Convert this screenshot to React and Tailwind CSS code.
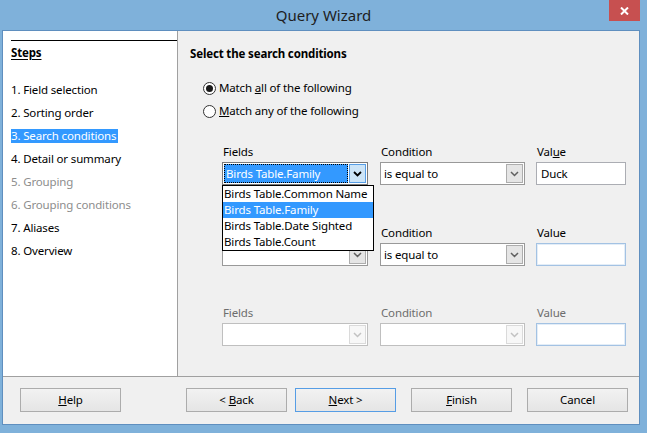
import React from "react";

const Chevron = ({ color = "#000", w = 1.6 }) => (
  <svg width="9" height="6" viewBox="0 0 9 6">
    <polyline points="1,1 4.5,4.5 8,1" fill="none" stroke={color} strokeWidth={w} />
  </svg>
);

function Combo({ className = "", text = "", focused, disabled }) {
  return (
    <div
      className={`flex h-[23px] p-[1px] bg-white border ${
        disabled ? "border-[#bfbfbf]" : focused ? "border-[#7a7a7a]" : "border-[#999999]"
      } ${className}`}
    >
      <div
        className={`flex-1 flex items-center pl-[2px] ${
          focused ? "bg-[#3399ff] text-white outline-1 outline-dotted outline-black -outline-offset-1" : ""
        }`}
      >
        {text}
      </div>
      <div
        className={`w-[17px] ml-[1px] flex items-center justify-center border ${
          focused
            ? "bg-[#cce4f7] border-[#569de5]"
            : disabled
            ? "bg-[#f7f7f7] border-[#dadada]"
            : "bg-[#e5e5e5] border-[#adadad]"
        }`}
      >
        <Chevron color={focused ? "#000" : disabled ? "#c2c2c2" : "#606060"} w={focused ? 1.8 : 1.5} />
      </div>
    </div>
  );
}

function Value({ text = "", blue }) {
  return (
    <div
      className={`w-[90px] h-[23px] bg-white border flex items-center pl-[4px] ${
        blue ? "border-[#a3c2e3] shadow-[inset_0_0_0_1px_#e3edf7]" : "border-[#abadb3]"
      }`}
    >
      {text}
    </div>
  );
}

function Row({ children, disabled, valueLabel, blue, value, conditionText, fieldsText, focused, hideFieldsLabel }) {
  const lbl = disabled ? "text-[#6d6d6d]" : "text-black";
  return (
    <div className="flex">
      <div className="w-[146px] mr-[12px] relative">
        <div className={`h-[16px] leading-[16px] pl-[1px] ${lbl} ${hideFieldsLabel ? "invisible" : ""}`}>Fields</div>
        <Combo className="mt-[2px]" text={fieldsText} focused={focused} disabled={disabled} />
        {children}
      </div>
      <div className="w-[145px] mr-[11px]">
        <div className={`h-[16px] leading-[16px] pl-[1px] ${lbl}`}>Condition</div>
        <Combo className="mt-[2px]" text={conditionText} disabled={disabled} />
      </div>
      <div className="w-[90px]">
        <div className={`h-[16px] leading-[16px] pl-[1px] ${lbl}`}>{valueLabel}</div>
        <div className="mt-[2px]">
          <Value text={value} blue={blue} />
        </div>
      </div>
    </div>
  );
}

const steps = [
  { t: "1. Field selection" },
  { t: "2. Sorting order" },
  { t: "3. Search conditions", active: true },
  { t: "4. Detail or summary" },
  { t: "5. Grouping", dis: true },
  { t: "6. Grouping conditions", dis: true },
  { t: "7. Aliases" },
  { t: "8. Overview" },
];

function Btn({ children, primary, className = "" }) {
  return (
    <button
      className={`w-[101px] h-[24px] border bg-linear-to-b from-[#f2f2f2] to-[#e5e5e5] text-black leading-none ${
        primary ? "border-[#569de5]" : "border-[#acacac]"
      } ${className}`}
    >
      {children}
    </button>
  );
}

export default function App() {
  return (
    <div className="w-[647px] h-[433px] bg-[#7fb1da] pl-[2px] pr-[7px] pb-[8px] flex flex-col font-['Noto_Sans',sans-serif] text-[11.5px] tracking-[-0.15px] text-black overflow-hidden">
      {/* title bar */}
      <div className="h-[30px] relative flex items-center justify-center -ml-[2px] -mr-[7px]">
        <span className="text-[15px] tracking-normal text-[#1e1e1e] pt-[1px]">Query Wizard</span>
        <div className="absolute top-0 right-[7px] w-[31px] h-[21px] bg-[#c75050] flex items-center justify-center">
          <svg width="9" height="8" viewBox="0 0 9 8">
            <path d="M1 0.5 L8 7.5 M8 0.5 L1 7.5" stroke="#fff" strokeWidth="2" />
          </svg>
        </div>
      </div>

      {/* client area */}
      <div className="flex-1 border border-[#5f8fbf] bg-[#f0f0f0] flex flex-col">
        <div className="h-[345px] flex">
          {/* steps */}
          <div className="w-[175px] bg-white border-r border-[#a0a0a0] pt-[9px]">
            <div className="ml-[8px] h-[1px] bg-black" />
            <div className="ml-[8px] mt-[4px] h-[16px] leading-[16px] font-bold underline underline-offset-2">Steps</div>
            <div className="ml-[8px] mt-[22px] flex flex-col gap-[9px]">
              {steps.map((s) => (
                <div key={s.t} className="h-[14px] leading-[14px]">
                  <span
                    className={`inline-block pr-[2px] ${
                      s.active ? "bg-[#3399ff] text-white" : s.dis ? "text-[#8d8d8d]" : "text-black"
                    }`}
                  >
                    {s.t}
                  </span>
                </div>
              ))}
            </div>
          </div>

          {/* conditions */}
          <div className="flex-1 pl-[12px] pt-[15px]">
            <div className="h-[16px] leading-[16px] font-bold">Select the search conditions</div>
            <div className="ml-[13px] mt-[18px] flex flex-col gap-[7px]">
              <div className="flex items-center h-[16px]">
                <div className="w-[13px] h-[13px] rounded-full border border-[#333] bg-white flex items-center justify-center">
                  <div className="w-[7px] h-[7px] rounded-full bg-[#1a1a1a]" />
                </div>
                <span className="ml-[3px]">
                  Match <u>a</u>ll of the following
                </span>
              </div>
              <div className="flex items-center h-[16px]">
                <div className="w-[13px] h-[13px] rounded-full border border-[#333] bg-white" />
                <span className="ml-[3px]">
                  <u>M</u>atch any of the following
                </span>
              </div>
            </div>

            <div className="ml-[32px] mt-[25px]">
              <Row
                focused
                fieldsText="Birds Table.Family"
                conditionText="is equal to"
                value="Duck"
                valueLabel={
                  <span>
                    Val<u>u</u>e
                  </span>
                }
              >
                <div className="absolute z-10 left-0 top-[41px] w-[152px] h-[66px] bg-white border border-black">
                  {["Birds Table.Common Name", "Birds Table.Family", "Birds Table.Date Sighted", "Birds Table.Count"].map(
                    (o) => (
                      <div
                        key={o}
                        className={`h-[16px] leading-[16px] pl-[1px] whitespace-nowrap ${
                          o === "Birds Table.Family" ? "bg-[#3399ff] text-white" : ""
                        }`}
                      >
                        {o}
                      </div>
                    )
                  )}
                </div>
              </Row>
              <div className="mt-[40px]">
                <Row hideFieldsLabel conditionText="is equal to" valueLabel="Value" blue />
              </div>
              <div className="mt-[39px]">
                <Row disabled valueLabel="Value" blue />
              </div>
            </div>
          </div>
        </div>

        {/* buttons */}
        <div className="flex-1 border-t border-[#a0a0a0] flex items-start pt-[11px] pl-[17px]">
          <Btn>
            <u>H</u>elp
          </Btn>
          <Btn className="ml-[65px]">
            &lt; <u>B</u>ack
          </Btn>
          <Btn primary className="ml-[8px]">
            <u>N</u>ext &gt;
          </Btn>
          <Btn className="ml-[15px]">
            <u>F</u>inish
          </Btn>
          <Btn className="ml-[15px]">Cancel</Btn>
        </div>
      </div>
    </div>
  );
}
